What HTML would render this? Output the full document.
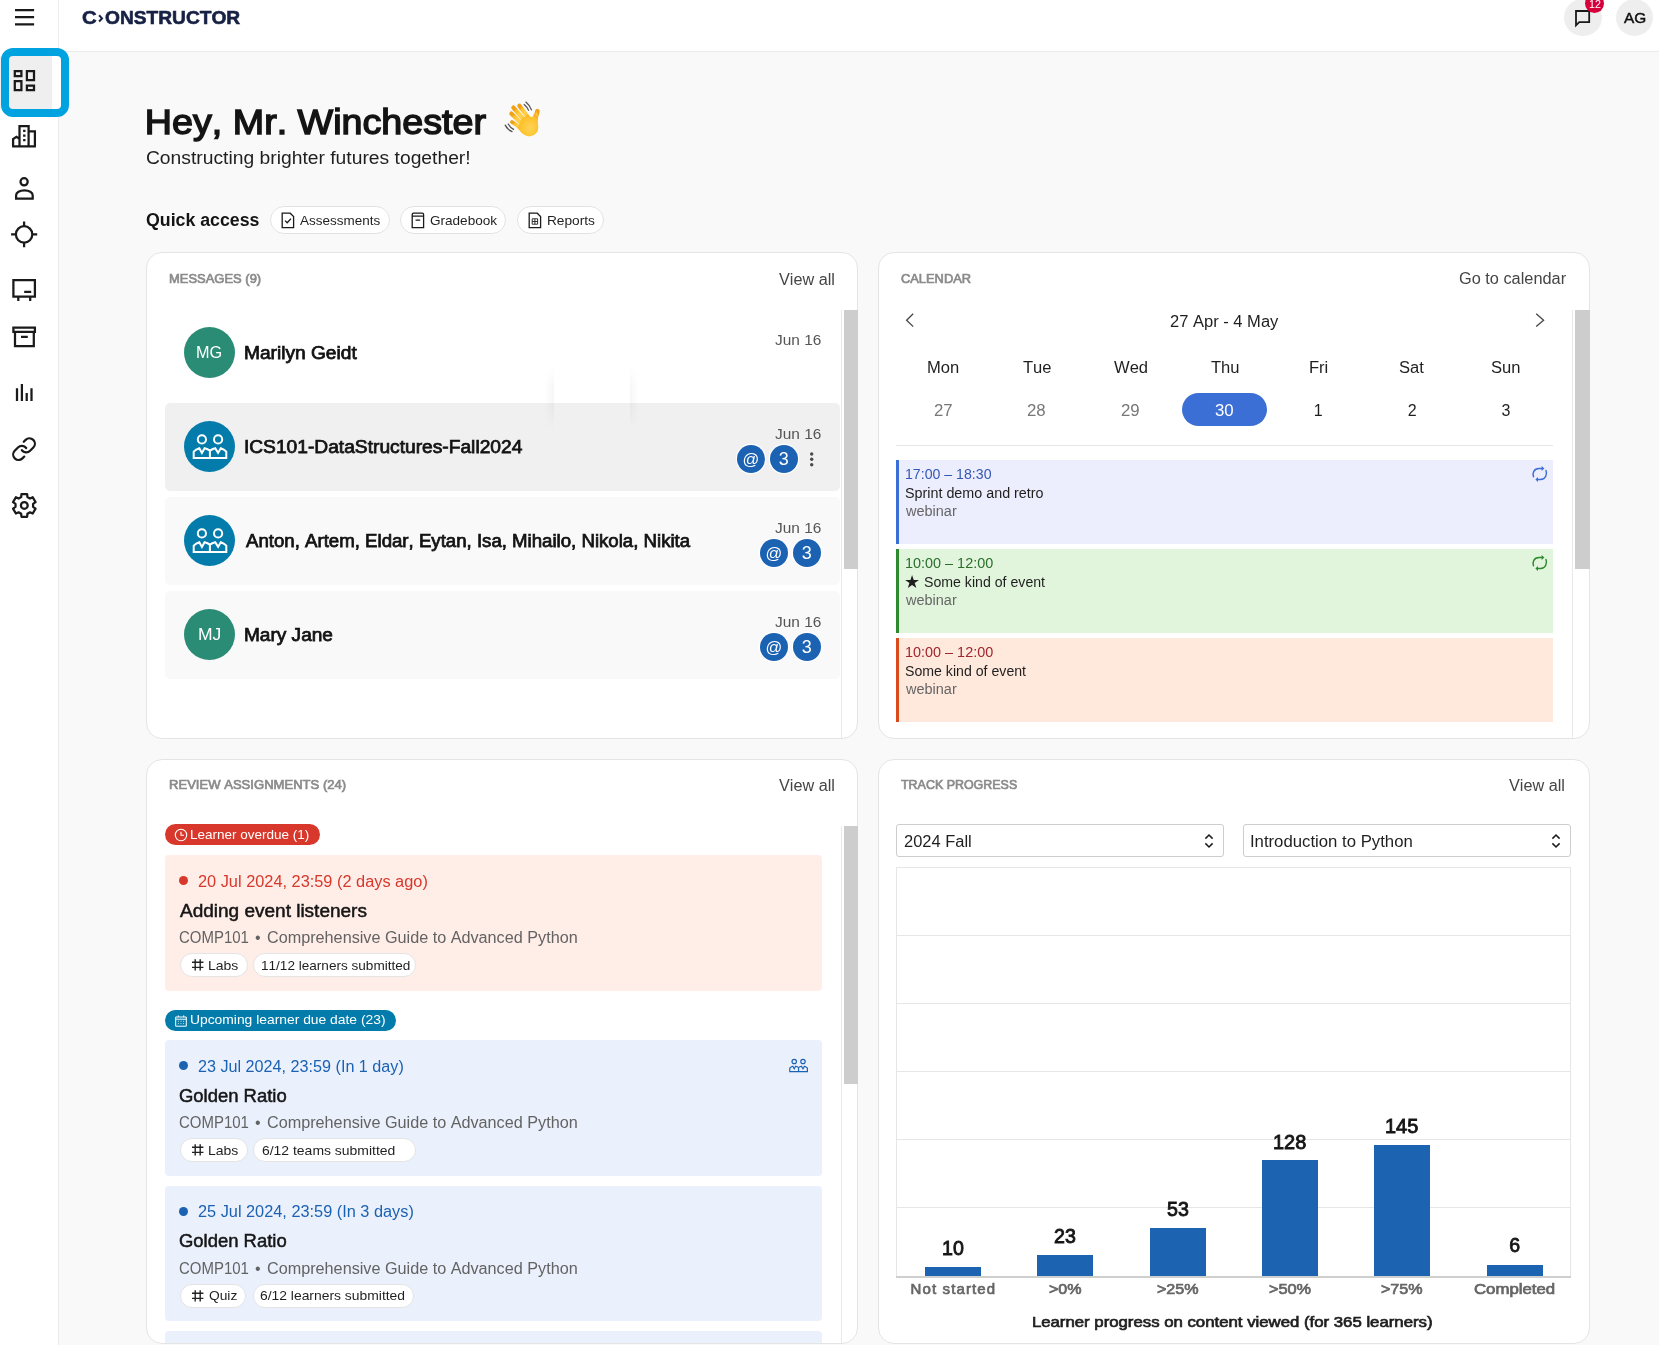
<!DOCTYPE html>
<html lang="en"><head><meta charset="utf-8"><title>Constructor – Dashboard</title>
<style>
*{box-sizing:border-box;margin:0;padding:0}
html,body{width:1659px;height:1345px;overflow:hidden;background:#f9f9f9}
body{position:relative;font-family:"Liberation Sans",Arial,Helvetica,sans-serif;color:#1f1f1f;-webkit-font-smoothing:antialiased}
.t{position:absolute;white-space:nowrap;display:block;font-kerning:none;font-variant-ligatures:none}
.a,div,header,nav,main,section,h1,h2,p,ul,li,button,a{position:absolute;display:block}
h1,h2,p{font-weight:inherit;font-size:inherit}
svg{overflow:visible}
.card{background:#fff;border:1px solid #e4e4e4;border-radius:16px;overflow:hidden}
.sk{fill:none;stroke:#1a1a1a;stroke-width:2.25}
</style></head><body>
<div id="app" style="left:0;top:0;width:1659px;height:1345px;will-change:transform">
<header style="left:0;top:0;width:0;height:0">
<div style="left:59px;top:0px;width:1600px;height:52px;background:#fff;border-bottom:1px solid #ebebeb"></div>
<div style="left:0;top:0;width:0;height:0" aria-label="Constructor"><span class="t" style="left:82.32px;top:6px;font-size:19px;line-height:24px;color:#172144;font-weight:700;-webkit-text-stroke:0.6px #172144;transform:scaleX(1.07);transform-origin:1px 50%;">C</span><svg class="a" style="left:98px;top:14px" width="6" height="9" viewBox="0 0 6 9" ><path d="M1.1 1.3L4 4.4L1.1 7.5" fill="none" stroke="#172144" stroke-width="2"/></svg><span class="t" style="left:104.82px;top:6px;font-size:19px;line-height:24px;color:#172144;font-weight:700;transform:scaleX(1.0084);transform-origin:0.48px 50%;-webkit-text-stroke:0.6px #172144;">ONSTRUCTOR</span></div>
<div style="left:1564px;top:-1.5px;width:37.5px;height:37.5px;border-radius:50%;background:#eee"></div>
<svg class="a" style="left:1574px;top:9px" width="18" height="18" viewBox="0 0 18 18" ><path d="M2 2H15.2V13.2H5.2L2 16.4Z" fill="none" stroke="#1a1a1a" stroke-width="1.8" stroke-linejoin="miter"/></svg>
<div style="left:1585px;top:-6.3px;width:19px;height:19px;border-radius:50%;background:#d5003b"></div>
<span class="t" style="left:1588.51px;top:-3px;font-size:11px;line-height:14px;color:#fff;transform:scaleX(0.9683);transform-origin:0.84px 50%;">12</span>
<div style="left:1615.6px;top:-1.5px;width:37.5px;height:37.5px;border-radius:50%;background:#eee"></div>
<span class="t" style="left:1623.75px;top:9px;font-size:14.5px;line-height:18px;color:#111;transform:scaleX(1.0597);transform-origin:-0.20px 50%;-webkit-text-stroke:0.45px #111;">AG</span>
</header>
<nav style="left:0;top:0;width:59px;height:1345px;background:#fff;border-right:1px solid #ececec">
<svg class="a" style="left:14px;top:9px" width="22" height="17" viewBox="0 0 22 17" ><path class="sk" style="stroke-width:2.2" d="M1 1.2H20.1M1 8.2H20.1M1 15.3H20.1"/></svg>
<div style="left:0px;top:56px;width:52px;height:53px;background:#efefef"></div>
<div style="left:52px;top:56px;width:9px;height:53px;background:#fff"></div>
<div style="left:1.3px;top:48.3px;width:67.7px;height:68.5px;border:8px solid #00a3df;border-radius:12px;background:transparent"></div>
<svg class="a" style="left:0;top:0" width="60" height="540" viewBox="0 0 60 540"><path class="sk" d="M14.8 71.2h6.6v4.9h-6.6zM26.9 71.2h7.1v9h-7.1zM14.8 81h6.6v9.2h-6.6zM26.9 85.6h7.1v4.6h-7.1z"/><path class="sk" d="M19.5 146.3V126.2H28.6V146.3M28.6 131.4H34.9V146.3M19.5 138.7L16.4 136.8L13.1 139V146.3M12.1 146.3H35.9" stroke-linejoin="miter"/><path d="M23.1 129.8h2.4v2.3h-2.4zM23.1 134.4h2.4v2.3h-2.4zM23.1 139h2.4v2.3h-2.4z" fill="#1a1a1a"/><circle class="sk" cx="24.1" cy="181.8" r="3.6"/><path class="sk" d="M16.1 198.6V195.2C16.1 192.4 19.6 190.3 24.4 190.3S32.7 192.4 32.7 195.2V198.6Z"/><circle class="sk" cx="24.1" cy="234.4" r="8.2"/><path class="sk" d="M24.1 221.6v4.6M24.1 242.6v4.7M11.1 234.4h4.8M32.3 234.4h4.9"/><path class="sk" d="M13.4 280.2H34.9V296.7H13.4ZM18.3 296.7V301M30.2 296.7V301M24.2 291.9H31.2"/><path class="sk" d="M13.4 327.6H34.9V331.8H13.4ZM15 331.8V346H33.8V331.8M21 336.8H27.8"/><path class="sk" d="M17 388.2V400.9M21.9 383.9V400.9M26.7 393V400.9M31.5 388.2V400.9"/><g transform="translate(10.95 436.05) scale(1.09)" class="sk" style="stroke-width:2.05" stroke-linecap="round" stroke-linejoin="round"><path d="M10 13a5 5 0 0 0 7.54.54l3-3a5 5 0 0 0-7.07-7.07l-1.72 1.71"/><path d="M14 11a5 5 0 0 0-7.54-.54l-3 3a5 5 0 0 0 7.07 7.07l1.71-1.71"/></g><path class="sk" d="M21.16 497.07 L21.46 494.05 L27.14 494.05 L27.44 497.07 L29.95 498.52 L32.71 497.27 L35.55 502.18 L33.08 503.95 L33.08 506.85 L35.55 508.62 L32.71 513.53 L29.95 512.28 L27.44 513.73 L27.14 516.75 L21.46 516.75 L21.16 513.73 L18.65 512.28 L15.89 513.53 L13.05 508.62 L15.52 506.85 L15.52 503.95 L13.05 502.18 L15.89 497.27 L18.65 498.52Z" stroke-linejoin="round"/><circle class="sk" cx="24.3" cy="505.4" r="3.4"/></svg>
</nav>
<main style="left:0;top:0;width:0;height:0">
<h1><span class="t" style="left:144.85px;top:100px;font-size:35px;line-height:44px;color:#141414;transform:scaleX(1.0762);transform-origin:2.15px 50%;-webkit-text-stroke:1.45px #141414;">Hey, Mr. Winchester</span></h1>
<svg class="a" style="left:495px;top:95px" width="55" height="50" viewBox="0 0 55 50" role="img" aria-label="waving hand"><defs><radialGradient id="hg" cx="60%" cy="62%" r="70%"><stop offset="0" stop-color="#ffd356"/><stop offset=".7" stop-color="#fcc12a"/><stop offset="1" stop-color="#f0a118"/></radialGradient></defs>
<g stroke="url(#hg)" stroke-linecap="round" fill="none"><path d="M24.4 10.7L33.5 23" stroke-width="4.3"/><path d="M18.4 12.6L30 26" stroke-width="4.3"/><path d="M16.3 18.6L28 30" stroke-width="4.2"/><path d="M17 27L27 33.8" stroke-width="3.9"/><path d="M42.4 16.2C41.5 19 40.6 22 40 27" stroke-width="4.6"/></g>
<path d="M27 24L33 19.5C35 22 38.5 23.5 38.8 19L43 22C42 27 44 31 43 35C41.5 40 36 42 32 41C28 40 25 36.5 22.5 33Z" fill="url(#hg)"/>
<g stroke="#555" stroke-width="1.25" fill="none" stroke-linecap="round"><path d="M30.9 7.1C33.6 9.4 35.6 12.2 36.5 14.9"/><path d="M29.2 9.5C31.2 11.2 32.6 13.2 33.5 15.3"/><path d="M10.2 30.1C11.8 33.2 14.2 35.4 17.1 36.6"/><path d="M13.2 29C14.5 31.4 16.3 33.2 18.6 34.4"/></g></svg>
<span class="t" aria-hidden="true" style="left:505px;top:102px;font-size:30px;line-height:34px;opacity:0">👋</span>
<p><span class="t" style="left:146.09px;top:147px;font-size:18px;line-height:22px;color:#1f1f1f;transform:scaleX(1.0711);transform-origin:0.91px 50%;">Constructing brighter futures together!</span></p>
<h2><span class="t" style="left:146.26px;top:209px;font-size:18px;line-height:22px;color:#141414;font-weight:700;transform:scaleX(0.9859);transform-origin:0.74px 50%;">Quick access</span></h2>
<div>
<a style="left:269.6px;top:206px;width:120px;height:28px;border:1px solid #e2e2e2;border-radius:14px;background:#fff"></a>
<svg class="a" style="left:281px;top:212px" width="14" height="17" viewBox="0 0 14 17" ><path fill="none" stroke="#1a1a1a" stroke-width="1.3" d="M1.2 1.2H9.2L12.6 4.6V15.6H1.2Z"/><path fill="none" stroke="#1a1a1a" stroke-width="1.3" d="M4 8.6L6.2 10.8L10 6.6"/></svg>
<span class="t" style="left:300.37px;top:213px;font-size:13px;line-height:16px;color:#1f1f1f;transform:scaleX(1.0364);transform-origin:0.03px 50%;">Assessments</span>
<a style="left:400px;top:206px;width:106px;height:28px;border:1px solid #e2e2e2;border-radius:14px;background:#fff"></a>
<svg class="a" style="left:411px;top:212px" width="14" height="17" viewBox="0 0 14 17" ><path fill="none" stroke="#1a1a1a" stroke-width="1.3" d="M1.2 2.6Q1.2 1.2 2.6 1.2H11.2Q12.6 1.2 12.6 2.6V15.6H1.2ZM1.2 4.2H12.6M4.6 8.2H9.2"/></svg>
<span class="t" style="left:429.55px;top:213px;font-size:13px;line-height:16px;color:#1f1f1f;transform:scaleX(1.0426);transform-origin:0.65px 50%;">Gradebook</span>
<a style="left:517px;top:206px;width:86.6px;height:28px;border:1px solid #e2e2e2;border-radius:14px;background:#fff"></a>
<svg class="a" style="left:528.3px;top:212px" width="14" height="17" viewBox="0 0 14 17" ><path fill="none" stroke="#1a1a1a" stroke-width="1.3" d="M1.2 1.2H9.2L12.6 4.6V15.6H1.2Z"/><path fill="none" stroke="#1a1a1a" stroke-width="0.9" d="M4.2 6.8H9.6V12.2H4.2ZM6.9 6.8V12.2M4.2 9.5H9.6"/></svg>
<span class="t" style="left:546.63px;top:213px;font-size:13px;line-height:16px;color:#1f1f1f;transform:scaleX(1.0550);transform-origin:1.07px 50%;">Reports</span>
</div>
<section class="card" style="left:146px;top:252px;width:712px;height:487px"></section>
<section style="left:0;top:0">
<h2><span class="t" style="left:169.28px;top:271px;font-size:13px;line-height:16px;color:#8b8b8b;transform:scaleX(0.9968);transform-origin:0.72px 50%;-webkit-text-stroke:0.7px #8b8b8b;">MESSAGES (9)</span></h2>
<span class="t" style="left:778.53px;top:270px;font-size:16px;line-height:20px;color:#454545;transform:scaleX(1.0150);transform-origin:0.07px 50%;">View all</span>
<div style="left:841px;top:310px;width:1px;height:428px;background:#e9e9e9"></div>
<div style="left:843.6px;top:310px;width:14.399999999999977px;height:258.5px;background:#cdcdcd"></div>
<div style="left:183.6px;top:326.7px;width:51.8px;height:51.8px;border-radius:50%;background:#2a8c75"></div>
<span class="t" style="left:196.39px;top:343px;font-size:16px;line-height:20px;color:#fff;transform:scaleX(1.0144);transform-origin:1.31px 50%;">MG</span>
<span class="t" style="left:244.20px;top:342px;font-size:18px;line-height:22px;color:#131313;transform:scaleX(1.0640);transform-origin:1.10px 50%;-webkit-text-stroke:0.75px #131313;">Marilyn Geidt</span>
<span class="t" style="left:774.57px;top:330px;font-size:15px;line-height:19px;color:#555;transform:scaleX(1.0285);transform-origin:0.23px 50%;">Jun 16</span>
<div style="left:165px;top:402.5px;width:675px;height:88px;background:#f0f0f0;border-radius:5px"></div>
<div style="left:183.6px;top:420.7px;width:51.8px;height:51.8px;border-radius:50%;background:#037cab"></div>
<svg class="a" style="left:183.5px;top:420.7px" width="52" height="52" viewBox="-26 -26 52 52" ><g fill="none" stroke="#fff" stroke-width="2"><circle cx="-8.1" cy="-7.6" r="4.1"/><circle cx="8.1" cy="-7.6" r="4.1"/><path d="M-16.3 11V4.6Q-14 2.2 -10.7 1.2L-8.1 5.9L-5.4 1.2Q-2.2 2 -0.1 3.7Q2 2 5.2 1.2L8.1 5.9L10.8 1.2Q14 2.2 16.3 4.6V11ZM-0.1 3.7V11" stroke-linejoin="miter"/></g></svg>
<span class="t" style="left:244.01px;top:436px;font-size:18px;line-height:22px;color:#131313;transform:scaleX(1.0663);transform-origin:1.29px 50%;-webkit-text-stroke:0.75px #131313;">ICS101-DataStructures-Fall2024</span>
<span class="t" style="left:774.57px;top:424px;font-size:15px;line-height:19px;color:#555;transform:scaleX(1.0285);transform-origin:0.23px 50%;">Jun 16</span>
<div style="left:736.6999999999999px;top:444.65px;width:28.2px;height:28.2px;border-radius:50%;background:#1b62b3;box-shadow:0 0 0 1.2px #fff"></div>
<span class="t" style="left:742.39px;top:449px;font-size:16.5px;line-height:21px;color:#fff;">@</span>
<div style="left:769.6px;top:444.65px;width:28.2px;height:28.2px;border-radius:50%;background:#1b62b3;box-shadow:0 0 0 1.2px #fff"></div>
<span class="t" style="left:778.75px;top:448px;font-size:18px;line-height:22px;color:#fff;">3</span>
<svg class="a" style="left:808px;top:450.5px" width="8" height="20" viewBox="0 0 8 20" ><circle cx="3.7" cy="3" r="1.7" fill="#4a4a4a"/><circle cx="3.7" cy="8.3" r="1.7" fill="#4a4a4a"/><circle cx="3.7" cy="13.7" r="1.7" fill="#4a4a4a"/></svg>
<div style="left:165px;top:496.5px;width:675px;height:88px;background:#f9f9f9;border-radius:5px"></div>
<div style="left:183.6px;top:514.7px;width:51.8px;height:51.8px;border-radius:50%;background:#037cab"></div>
<svg class="a" style="left:183.5px;top:514.7px" width="52" height="52" viewBox="-26 -26 52 52" ><g fill="none" stroke="#fff" stroke-width="2"><circle cx="-8.1" cy="-7.6" r="4.1"/><circle cx="8.1" cy="-7.6" r="4.1"/><path d="M-16.3 11V4.6Q-14 2.2 -10.7 1.2L-8.1 5.9L-5.4 1.2Q-2.2 2 -0.1 3.7Q2 2 5.2 1.2L8.1 5.9L10.8 1.2Q14 2.2 16.3 4.6V11ZM-0.1 3.7V11" stroke-linejoin="miter"/></g></svg>
<span class="t" style="left:245.64px;top:530px;font-size:18px;line-height:22px;color:#131313;transform:scaleX(1.0349);transform-origin:-0.34px 50%;-webkit-text-stroke:0.75px #131313;">Anton, Artem, Eldar, Eytan, Isa, Mihailo, Nikola, Nikita</span>
<span class="t" style="left:774.57px;top:518px;font-size:15px;line-height:19px;color:#555;transform:scaleX(1.0285);transform-origin:0.23px 50%;">Jun 16</span>
<div style="left:759.6999999999999px;top:538.65px;width:28.2px;height:28.2px;border-radius:50%;background:#1b62b3;box-shadow:0 0 0 1.2px #fff"></div>
<span class="t" style="left:765.39px;top:543px;font-size:16.5px;line-height:21px;color:#fff;">@</span>
<div style="left:792.6px;top:538.65px;width:28.2px;height:28.2px;border-radius:50%;background:#1b62b3;box-shadow:0 0 0 1.2px #fff"></div>
<span class="t" style="left:801.75px;top:542px;font-size:18px;line-height:22px;color:#fff;">3</span>
<div style="left:165px;top:590.5px;width:675px;height:88px;background:#f9f9f9;border-radius:5px"></div>
<div style="left:183.6px;top:608.7px;width:51.8px;height:51.8px;border-radius:50%;background:#2a8c75"></div>
<span class="t" style="left:197.89px;top:625px;font-size:16px;line-height:20px;color:#fff;transform:scaleX(1.0941);transform-origin:1.31px 50%;">MJ</span>
<span class="t" style="left:244.20px;top:624px;font-size:18px;line-height:22px;color:#131313;transform:scaleX(1.0593);transform-origin:1.10px 50%;-webkit-text-stroke:0.75px #131313;">Mary Jane</span>
<span class="t" style="left:774.57px;top:612px;font-size:15px;line-height:19px;color:#555;transform:scaleX(1.0285);transform-origin:0.23px 50%;">Jun 16</span>
<div style="left:759.6999999999999px;top:632.65px;width:28.2px;height:28.2px;border-radius:50%;background:#1b62b3;box-shadow:0 0 0 1.2px #fff"></div>
<span class="t" style="left:765.39px;top:637px;font-size:16.5px;line-height:21px;color:#fff;">@</span>
<div style="left:792.6px;top:632.65px;width:28.2px;height:28.2px;border-radius:50%;background:#1b62b3;box-shadow:0 0 0 1.2px #fff"></div>
<span class="t" style="left:801.75px;top:636px;font-size:18px;line-height:22px;color:#fff;">3</span>
<div style="left:545px;top:366px;width:9px;height:64px;background:linear-gradient(90deg,rgba(0,0,0,0),rgba(0,0,0,.035));-webkit-mask-image:linear-gradient(180deg,transparent,#000 35%,#000 65%,transparent);mask-image:linear-gradient(180deg,transparent,#000 35%,#000 65%,transparent)"></div>
<div style="left:630px;top:366px;width:9px;height:64px;background:linear-gradient(90deg,rgba(0,0,0,.03),rgba(0,0,0,0));-webkit-mask-image:linear-gradient(180deg,transparent,#000 35%,#000 65%,transparent);mask-image:linear-gradient(180deg,transparent,#000 35%,#000 65%,transparent)"></div>
</section>
<section class="card" style="left:878px;top:252px;width:712px;height:487px"></section>
<section style="left:0;top:0">
<h2><span class="t" style="left:900.69px;top:271px;font-size:13px;line-height:16px;color:#8b8b8b;transform:scaleX(0.9896);transform-origin:0.31px 50%;-webkit-text-stroke:0.7px #8b8b8b;">CALENDAR</span></h2>
<span class="t" style="left:1459.20px;top:269px;font-size:16px;line-height:20px;color:#454545;transform:scaleX(1.0204);transform-origin:0.80px 50%;">Go to calendar</span>
<div style="left:1572px;top:310px;width:1px;height:428px;background:#e9e9e9"></div>
<div style="left:1574.6px;top:310px;width:15.400000000000091px;height:258.79999999999995px;background:#cdcdcd"></div>
<svg class="a" style="left:904px;top:312px" width="12" height="16" viewBox="0 0 12 16" ><path fill="none" stroke="#444" stroke-width="1.3" d="M9.2 1.8L2.6 8.2L9.2 14.6"/></svg>
<svg class="a" style="left:1534px;top:312px" width="12" height="16" viewBox="0 0 12 16" ><path fill="none" stroke="#444" stroke-width="1.3" d="M2.2 1.8L9.6 8.2L2.2 14.6"/></svg>
<span class="t" style="left:1169.75px;top:312px;font-size:16px;line-height:20px;color:#1f1f1f;transform:scaleX(1.0327);transform-origin:0.80px 50%;">27 Apr - 4 May</span>
<div style="left:1182px;top:393.2px;width:84.8px;height:32.5px;border-radius:17px;background:#3b6fd6"></div>
<span class="t" style="left:926.80px;top:358px;font-size:16px;line-height:20px;color:#1f1f1f;transform:scaleX(1.0350);transform-origin:1.31px 50%;">Mon</span>
<span class="t" style="left:933.70px;top:401px;font-size:16px;line-height:20px;color:#777;transform:scaleX(1.0500);transform-origin:0.80px 50%;">27</span>
<span class="t" style="left:1022.76px;top:358px;font-size:16px;line-height:20px;color:#1f1f1f;transform:scaleX(1.0350);transform-origin:0.36px 50%;">Tue</span>
<span class="t" style="left:1027.47px;top:401px;font-size:16px;line-height:20px;color:#777;transform:scaleX(1.0500);transform-origin:0.80px 50%;">28</span>
<span class="t" style="left:1114.13px;top:358px;font-size:16px;line-height:20px;color:#1f1f1f;transform:scaleX(1.0350);transform-origin:0.07px 50%;">Wed</span>
<span class="t" style="left:1121.33px;top:401px;font-size:16px;line-height:20px;color:#777;transform:scaleX(1.0500);transform-origin:0.80px 50%;">29</span>
<span class="t" style="left:1210.60px;top:358px;font-size:16px;line-height:20px;color:#1f1f1f;transform:scaleX(1.0350);transform-origin:0.36px 50%;">Thu</span>
<span class="t" style="left:1215.19px;top:401px;font-size:16px;line-height:20px;color:#fff;transform:scaleX(1.0500);transform-origin:0.61px 50%;">30</span>
<span class="t" style="left:1308.59px;top:358px;font-size:16px;line-height:20px;color:#1f1f1f;transform:scaleX(1.0350);transform-origin:1.31px 50%;">Fri</span>
<span class="t" style="left:1313.65px;top:401px;font-size:16px;line-height:20px;color:#1f1f1f;">1</span>
<span class="t" style="left:1399.43px;top:358px;font-size:16px;line-height:20px;color:#1f1f1f;transform:scaleX(1.0350);transform-origin:0.73px 50%;">Sat</span>
<span class="t" style="left:1407.70px;top:401px;font-size:16px;line-height:20px;color:#1f1f1f;">2</span>
<span class="t" style="left:1491.43px;top:358px;font-size:16px;line-height:20px;color:#1f1f1f;transform:scaleX(1.0350);transform-origin:0.73px 50%;">Sun</span>
<span class="t" style="left:1501.58px;top:401px;font-size:16px;line-height:20px;color:#1f1f1f;">3</span>
<div style="left:896px;top:445px;width:657px;height:1px;background:#e6e6e6"></div>
<div style="left:896px;top:460px;width:657px;height:84px;background:#ecedfd"></div>
<div style="left:896px;top:460px;width:2.5px;height:84px;background:#3b6fd6"></div>
<span class="t" style="left:904.73px;top:465px;font-size:14px;line-height:18px;color:#3557b5;transform:scaleX(1.0105);transform-origin:1.07px 50%;">17:00 – 18:30</span>
<span class="t" style="left:905.16px;top:484px;font-size:14px;line-height:18px;color:#1f1f1f;transform:scaleX(1.0232);transform-origin:0.64px 50%;">Sprint demo and retro</span>
<span class="t" style="left:905.82px;top:502px;font-size:14px;line-height:18px;color:#666;transform:scaleX(1.0345);transform-origin:-0.02px 50%;">webinar</span>
<svg class="a" style="left:1530.5px;top:465px" width="18" height="18" viewBox="0 0 18 18" ><g fill="none" stroke="#3b6fd6" stroke-width="1.45" stroke-linecap="round"><path d="M2.5 11.7C1.2 8.2 2.8 3.6 8 3.5H11.4"/><path d="M15 5.4C16.4 8.9 14.8 14.4 9.6 14.5H6.6"/></g><path d="M10.6 0.9L13.4 3.5L10.6 6.1ZM7 11.9L4.4 14.5L7 17.1Z" fill="#3b6fd6"/></svg>
<div style="left:896px;top:549px;width:657px;height:84px;background:#e1f5dc"></div>
<div style="left:896px;top:549px;width:2.5px;height:84px;background:#2f8a2f"></div>
<span class="t" style="left:904.73px;top:554px;font-size:14px;line-height:18px;color:#2c6e2c;transform:scaleX(1.0307);transform-origin:1.07px 50%;">10:00 – 12:00</span>
<span class="t" style="left:903.80px;top:571px;font-size:18px;line-height:22px;color:#1f1f1f;font-family:"DejaVu Sans",sans-serif;">★</span>
<span class="t" style="left:923.76px;top:573px;font-size:14px;line-height:18px;color:#1f1f1f;transform:scaleX(1.0100);transform-origin:0.64px 50%;">Some kind of event</span>
<span class="t" style="left:905.82px;top:591px;font-size:14px;line-height:18px;color:#666;transform:scaleX(1.0345);transform-origin:-0.02px 50%;">webinar</span>
<svg class="a" style="left:1530.5px;top:554px" width="18" height="18" viewBox="0 0 18 18" ><g fill="none" stroke="#2f8a2f" stroke-width="1.45" stroke-linecap="round"><path d="M2.5 11.7C1.2 8.2 2.8 3.6 8 3.5H11.4"/><path d="M15 5.4C16.4 8.9 14.8 14.4 9.6 14.5H6.6"/></g><path d="M10.6 0.9L13.4 3.5L10.6 6.1ZM7 11.9L4.4 14.5L7 17.1Z" fill="#2f8a2f"/></svg>
<div style="left:896px;top:638px;width:657px;height:84px;background:#ffe9dd"></div>
<div style="left:896px;top:638px;width:2.5px;height:84px;background:#d84a1b"></div>
<span class="t" style="left:904.73px;top:643px;font-size:14px;line-height:18px;color:#a1262d;transform:scaleX(1.0307);transform-origin:1.07px 50%;">10:00 – 12:00</span>
<span class="t" style="left:905.16px;top:662px;font-size:14px;line-height:18px;color:#1f1f1f;transform:scaleX(1.0100);transform-origin:0.64px 50%;">Some kind of event</span>
<span class="t" style="left:905.82px;top:680px;font-size:14px;line-height:18px;color:#666;transform:scaleX(1.0345);transform-origin:-0.02px 50%;">webinar</span>
</section>
<section class="card" style="left:146px;top:759px;width:712px;height:585px"></section>
<section style="left:0;top:0">
<h2><span class="t" style="left:169.28px;top:777px;font-size:13px;line-height:16px;color:#8b8b8b;transform:scaleX(1.0053);transform-origin:0.72px 50%;-webkit-text-stroke:0.7px #8b8b8b;">REVIEW ASSIGNMENTS (24)</span></h2>
<span class="t" style="left:778.53px;top:776px;font-size:16px;line-height:20px;color:#454545;transform:scaleX(1.0150);transform-origin:0.07px 50%;">View all</span>
<div style="left:841px;top:826px;width:1px;height:517px;background:#e9e9e9"></div>
<div style="left:843.6px;top:826px;width:14.399999999999977px;height:258.29999999999995px;background:#cdcdcd"></div>
<div style="left:164.6px;top:824.3px;width:155px;height:21px;border-radius:11px;background:#d8382b"></div>
<svg class="a" style="left:174px;top:828px" width="14" height="14" viewBox="0 0 14 14" ><circle cx="7" cy="7" r="5.7" fill="none" stroke="#fff" stroke-width="1.1"/><path d="M7 3.8V7.3H10" fill="none" stroke="#fff" stroke-width="1.1"/></svg>
<span class="t" style="left:190.23px;top:827px;font-size:13px;line-height:16px;color:#fff;transform:scaleX(1.0387);transform-origin:1.07px 50%;">Learner overdue (1)</span>
<div style="left:165px;top:1010px;width:230.6px;height:21px;border-radius:11px;background:#037cab"></div>
<svg class="a" style="left:174px;top:1013.5px" width="14" height="14" viewBox="0 0 14 14" ><path d="M1.7 3H12.3V12.2H1.7Z" fill="none" stroke="#fff" stroke-width="1"/><path d="M4.3 1.4V3M9.7 1.4V3M1.7 5.2H12.3" fill="none" stroke="#fff" stroke-width="1"/><path d="M3.9 7.3h1M6.5 7.3h1M9.1 7.3h1M3.9 9.6h1M6.5 9.6h1M9.1 9.6h1" stroke="#fff" stroke-width="0.9" opacity=".9"/></svg>
<span class="t" style="left:190.00px;top:1012px;font-size:13px;line-height:16px;color:#fff;transform:scaleX(1.0658);transform-origin:1.00px 50%;">Upcoming learner due date (23)</span>
<div style="left:165px;top:855px;width:657.3px;height:135.5px;background:#ffede8;border-radius:4px"></div>
<div style="left:179.2px;top:876px;width:9.2px;height:9.2px;border-radius:50%;background:#d8382b"></div>
<span class="t" style="left:197.50px;top:872px;font-size:16px;line-height:20px;color:#d8382b;transform:scaleX(1.0213);transform-origin:0.80px 50%;">20 Jul 2024, 23:59 (2 days ago)</span>
<span class="t" style="left:179.81px;top:900px;font-size:18px;line-height:22px;color:#161616;transform:scaleX(1.0553);transform-origin:-0.21px 50%;-webkit-text-stroke:0.5px #161616;">Adding event listeners</span>
<span class="t" style="left:178.79px;top:928px;font-size:16px;line-height:20px;color:#636363;transform:scaleX(0.9357);transform-origin:0.81px 50%;">COMP101</span><span class="t" style="left:255.07px;top:928px;font-size:16px;line-height:20px;color:#636363;">•</span><span class="t" style="left:267.39px;top:928px;font-size:16px;line-height:20px;color:#636363;transform:scaleX(1.0125);transform-origin:0.81px 50%;">Comprehensive Guide to Advanced Python</span>
<div style="left:179.5px;top:953px;width:68px;height:24px;border:1px solid #e4e4e4;border-radius:12px;background:#fff"></div>
<svg class="a" style="left:191px;top:958px" width="14" height="14" viewBox="0 0 14 14" ><path d="M4.2 1.2V12.4M9.2 1.2V12.4M1 4.2H12.4M1 9.4H12.4" fill="none" stroke="#222" stroke-width="1.4"/></svg>
<span class="t" style="left:208.43px;top:958px;font-size:13px;line-height:16px;color:#1f1f1f;transform:scaleX(1.0768);transform-origin:1.07px 50%;">Labs</span>
<div style="left:253.2px;top:953px;width:162.5px;height:24px;border:1px solid #e4e4e4;border-radius:12px;background:#fff"></div>
<span class="t" style="left:261.01px;top:958px;font-size:13px;line-height:16px;color:#1f1f1f;transform:scaleX(1.0442);transform-origin:0.99px 50%;">11/12 learners submitted</span>
<div style="left:165px;top:1040px;width:657.3px;height:135.5px;background:#eaf0fc;border-radius:4px"></div>
<div style="left:179.2px;top:1061px;width:9.2px;height:9.2px;border-radius:50%;background:#1b62b3"></div>
<span class="t" style="left:197.50px;top:1057px;font-size:16px;line-height:20px;color:#1b62b3;transform:scaleX(1.0104);transform-origin:0.80px 50%;">23 Jul 2024, 23:59 (In 1 day)</span>
<span class="t" style="left:178.94px;top:1085px;font-size:18px;line-height:22px;color:#161616;transform:scaleX(1.0250);transform-origin:0.66px 50%;-webkit-text-stroke:0.5px #161616;">Golden Ratio</span>
<span class="t" style="left:178.79px;top:1113px;font-size:16px;line-height:20px;color:#636363;transform:scaleX(0.9357);transform-origin:0.81px 50%;">COMP101</span><span class="t" style="left:255.07px;top:1113px;font-size:16px;line-height:20px;color:#636363;">•</span><span class="t" style="left:267.39px;top:1113px;font-size:16px;line-height:20px;color:#636363;transform:scaleX(1.0125);transform-origin:0.81px 50%;">Comprehensive Guide to Advanced Python</span>
<div style="left:179.5px;top:1138px;width:68px;height:24px;border:1px solid #e4e4e4;border-radius:12px;background:#fff"></div>
<svg class="a" style="left:191px;top:1143px" width="14" height="14" viewBox="0 0 14 14" ><path d="M4.2 1.2V12.4M9.2 1.2V12.4M1 4.2H12.4M1 9.4H12.4" fill="none" stroke="#222" stroke-width="1.4"/></svg>
<span class="t" style="left:208.43px;top:1143px;font-size:13px;line-height:16px;color:#1f1f1f;transform:scaleX(1.0768);transform-origin:1.07px 50%;">Labs</span>
<div style="left:253.4px;top:1138px;width:162.5px;height:24px;border:1px solid #e4e4e4;border-radius:12px;background:#fff"></div>
<span class="t" style="left:261.54px;top:1143px;font-size:13px;line-height:16px;color:#1f1f1f;transform:scaleX(1.0734);transform-origin:0.66px 50%;">6/12 teams submitted</span>
<svg class="a" style="left:788px;top:1056px" width="22" height="18" viewBox="0 0 22 18" ><g transform="translate(10.6 9.6) scale(0.54)" fill="none" stroke="#1b62b3" stroke-width="2.2"><circle cx="-8.1" cy="-7.6" r="4.1"/><circle cx="8.1" cy="-7.6" r="4.1"/><path d="M-16.3 11V4.6Q-14 2.2 -10.7 1.2L-8.1 5.9L-5.4 1.2Q-2.2 2 -0.1 3.7Q2 2 5.2 1.2L8.1 5.9L10.8 1.2Q14 2.2 16.3 4.6V11ZM-0.1 3.7V11"/></g></svg>
<div style="left:165px;top:1185.5px;width:657.3px;height:135.5px;background:#eaf0fc;border-radius:4px"></div>
<div style="left:179.2px;top:1206.5px;width:9.2px;height:9.2px;border-radius:50%;background:#1b62b3"></div>
<span class="t" style="left:197.50px;top:1202px;font-size:16px;line-height:20px;color:#1b62b3;transform:scaleX(1.0195);transform-origin:0.80px 50%;">25 Jul 2024, 23:59 (In 3 days)</span>
<span class="t" style="left:178.94px;top:1230px;font-size:18px;line-height:22px;color:#161616;transform:scaleX(1.0250);transform-origin:0.66px 50%;-webkit-text-stroke:0.5px #161616;">Golden Ratio</span>
<span class="t" style="left:178.79px;top:1259px;font-size:16px;line-height:20px;color:#636363;transform:scaleX(0.9357);transform-origin:0.81px 50%;">COMP101</span><span class="t" style="left:255.07px;top:1259px;font-size:16px;line-height:20px;color:#636363;">•</span><span class="t" style="left:267.39px;top:1259px;font-size:16px;line-height:20px;color:#636363;transform:scaleX(1.0125);transform-origin:0.81px 50%;">Comprehensive Guide to Advanced Python</span>
<div style="left:179.5px;top:1283.5px;width:66.2px;height:24px;border:1px solid #e4e4e4;border-radius:12px;background:#fff"></div>
<svg class="a" style="left:191px;top:1288.5px" width="14" height="14" viewBox="0 0 14 14" ><path d="M4.2 1.2V12.4M9.2 1.2V12.4M1 4.2H12.4M1 9.4H12.4" fill="none" stroke="#222" stroke-width="1.4"/></svg>
<span class="t" style="left:208.88px;top:1288px;font-size:13px;line-height:16px;color:#1f1f1f;transform:scaleX(1.0602);transform-origin:0.62px 50%;">Quiz</span>
<div style="left:252.7px;top:1283.5px;width:161.8px;height:24px;border:1px solid #e4e4e4;border-radius:12px;background:#fff"></div>
<span class="t" style="left:260.34px;top:1288px;font-size:13px;line-height:16px;color:#1f1f1f;transform:scaleX(1.0681);transform-origin:0.66px 50%;">6/12 learners submitted</span>
<div style="left:165px;top:1331px;width:657.3px;height:12px;background:#eaf0fc;border-radius:4px 4px 0 0"></div>
</section>
<section class="card" style="left:878px;top:759px;width:712px;height:585px"></section>
<section style="left:0;top:0">
<h2><span class="t" style="left:901.06px;top:777px;font-size:13px;line-height:16px;color:#8b8b8b;transform:scaleX(0.9574);transform-origin:-0.06px 50%;-webkit-text-stroke:0.7px #8b8b8b;">TRACK PROGRESS</span></h2>
<span class="t" style="left:1509.13px;top:776px;font-size:16px;line-height:20px;color:#454545;transform:scaleX(1.0150);transform-origin:0.07px 50%;">View all</span>
<div style="left:896.2px;top:824px;width:327.4px;height:33px;border:1px solid #cdcdcd;border-radius:3px;background:#fff"></div>
<span class="t" style="left:904.00px;top:832px;font-size:16px;line-height:20px;color:#1f1f1f;transform:scaleX(1.0290);transform-origin:0.80px 50%;">2024 Fall</span>
<svg class="a" style="left:1203.6999999999998px;top:832.8px" width="10" height="16" viewBox="0 0 10 16" ><path d="M1.4 5.6L5 2L8.6 5.6M1.4 10.4L5 14L8.6 10.4" fill="none" stroke="#1a1a1a" stroke-width="1.5"/></svg>
<div style="left:1243px;top:824px;width:327.6px;height:33px;border:1px solid #cdcdcd;border-radius:3px;background:#fff"></div>
<span class="t" style="left:1250.12px;top:832px;font-size:16px;line-height:20px;color:#1f1f1f;transform:scaleX(1.0461);transform-origin:1.48px 50%;">Introduction to Python</span>
<svg class="a" style="left:1550.6999999999998px;top:832.8px" width="10" height="16" viewBox="0 0 10 16" ><path d="M1.4 5.6L5 2L8.6 5.6M1.4 10.4L5 14L8.6 10.4" fill="none" stroke="#1a1a1a" stroke-width="1.5"/></svg>
<div style="left:896.0px;top:866.5px;width:675.0px;height:411px;border:1px solid #e6e6e6;border-bottom:none"></div>
<div style="left:896.5px;top:934.75px;width:674.0px;height:1px;background:#e6e6e6"></div>
<div style="left:896.5px;top:1002.9000000000001px;width:674.0px;height:1px;background:#e6e6e6"></div>
<div style="left:896.5px;top:1071.05px;width:674.0px;height:1px;background:#e6e6e6"></div>
<div style="left:896.5px;top:1139.2px;width:674.0px;height:1px;background:#e6e6e6"></div>
<div style="left:896.5px;top:1207.35px;width:674.0px;height:1px;background:#e6e6e6"></div>
<div style="left:896.0px;top:1276px;width:675.0px;height:1.6px;background:#cfcfcf"></div>
<div style="left:924.8649999999999px;top:1266.5849999999998px;width:56.2px;height:9.015px;background:#1c64b2"></div>
<span class="t" style="left:941.70px;top:1236px;font-size:19.5px;line-height:24px;color:#161616;transform:scaleX(1.0060);transform-origin:1.06px 50%;-webkit-text-stroke:0.85px #161616;">10</span>
<span class="t" style="left:910.48px;top:1279px;font-size:15px;line-height:19px;color:#666;letter-spacing:1.133px;-webkit-text-stroke:0.7px #666;">Not started</span>
<div style="left:1037.195px;top:1254.8654999999999px;width:56.2px;height:20.7345px;background:#1c64b2"></div>
<span class="t" style="left:1054.32px;top:1224px;font-size:19.5px;line-height:24px;color:#161616;transform:scaleX(1.0069);transform-origin:0.56px 50%;-webkit-text-stroke:0.85px #161616;">23</span>
<span class="t" style="left:1048.91px;top:1279px;font-size:15px;line-height:19px;color:#666;transform:scaleX(1.0715);transform-origin:0.39px 50%;-webkit-text-stroke:0.7px #666;">&gt;0%</span>
<div style="left:1149.525px;top:1227.8204999999998px;width:56.2px;height:47.7795px;background:#1c64b2"></div>
<span class="t" style="left:1166.74px;top:1197px;font-size:19.5px;line-height:24px;color:#161616;transform:scaleX(1.0073);transform-origin:0.36px 50%;-webkit-text-stroke:0.85px #161616;">53</span>
<span class="t" style="left:1156.74px;top:1279px;font-size:15px;line-height:19px;color:#666;transform:scaleX(1.0731);transform-origin:0.39px 50%;-webkit-text-stroke:0.7px #666;">&gt;25%</span>
<div style="left:1261.855px;top:1160.2079999999999px;width:56.2px;height:115.392px;background:#1c64b2"></div>
<span class="t" style="left:1273.04px;top:1130px;font-size:19.5px;line-height:24px;color:#161616;transform:scaleX(1.0213);transform-origin:1.06px 50%;-webkit-text-stroke:0.85px #161616;">128</span>
<span class="t" style="left:1268.82px;top:1279px;font-size:15px;line-height:19px;color:#666;transform:scaleX(1.0862);transform-origin:0.39px 50%;-webkit-text-stroke:0.7px #666;">&gt;50%</span>
<div style="left:1374.1850000000002px;top:1144.8825px;width:56.2px;height:130.7175px;background:#1c64b2"></div>
<span class="t" style="left:1385.35px;top:1114px;font-size:19.5px;line-height:24px;color:#161616;transform:scaleX(1.0213);transform-origin:1.06px 50%;-webkit-text-stroke:0.85px #161616;">145</span>
<span class="t" style="left:1381.40px;top:1279px;font-size:15px;line-height:19px;color:#666;transform:scaleX(1.0731);transform-origin:0.39px 50%;-webkit-text-stroke:0.7px #666;">&gt;75%</span>
<div style="left:1486.515px;top:1265.1px;width:56.2px;height:10.5px;background:#1c64b2"></div>
<span class="t" style="left:1509.13px;top:1233px;font-size:19.5px;line-height:24px;color:#161616;-webkit-text-stroke:0.85px #161616;">6</span>
<span class="t" style="left:1474.20px;top:1279px;font-size:15px;line-height:19px;color:#666;transform:scaleX(1.1187);transform-origin:0.41px 50%;-webkit-text-stroke:0.7px #666;">Completed</span>
<span class="t" style="left:1032.32px;top:1312px;font-size:15px;line-height:19px;color:#1f1f1f;transform:scaleX(1.1174);transform-origin:0.88px 50%;-webkit-text-stroke:0.7px #1f1f1f;">Learner progress on content viewed (for 365 learners)</span>
</section>
</main>
</div>
</body></html>
